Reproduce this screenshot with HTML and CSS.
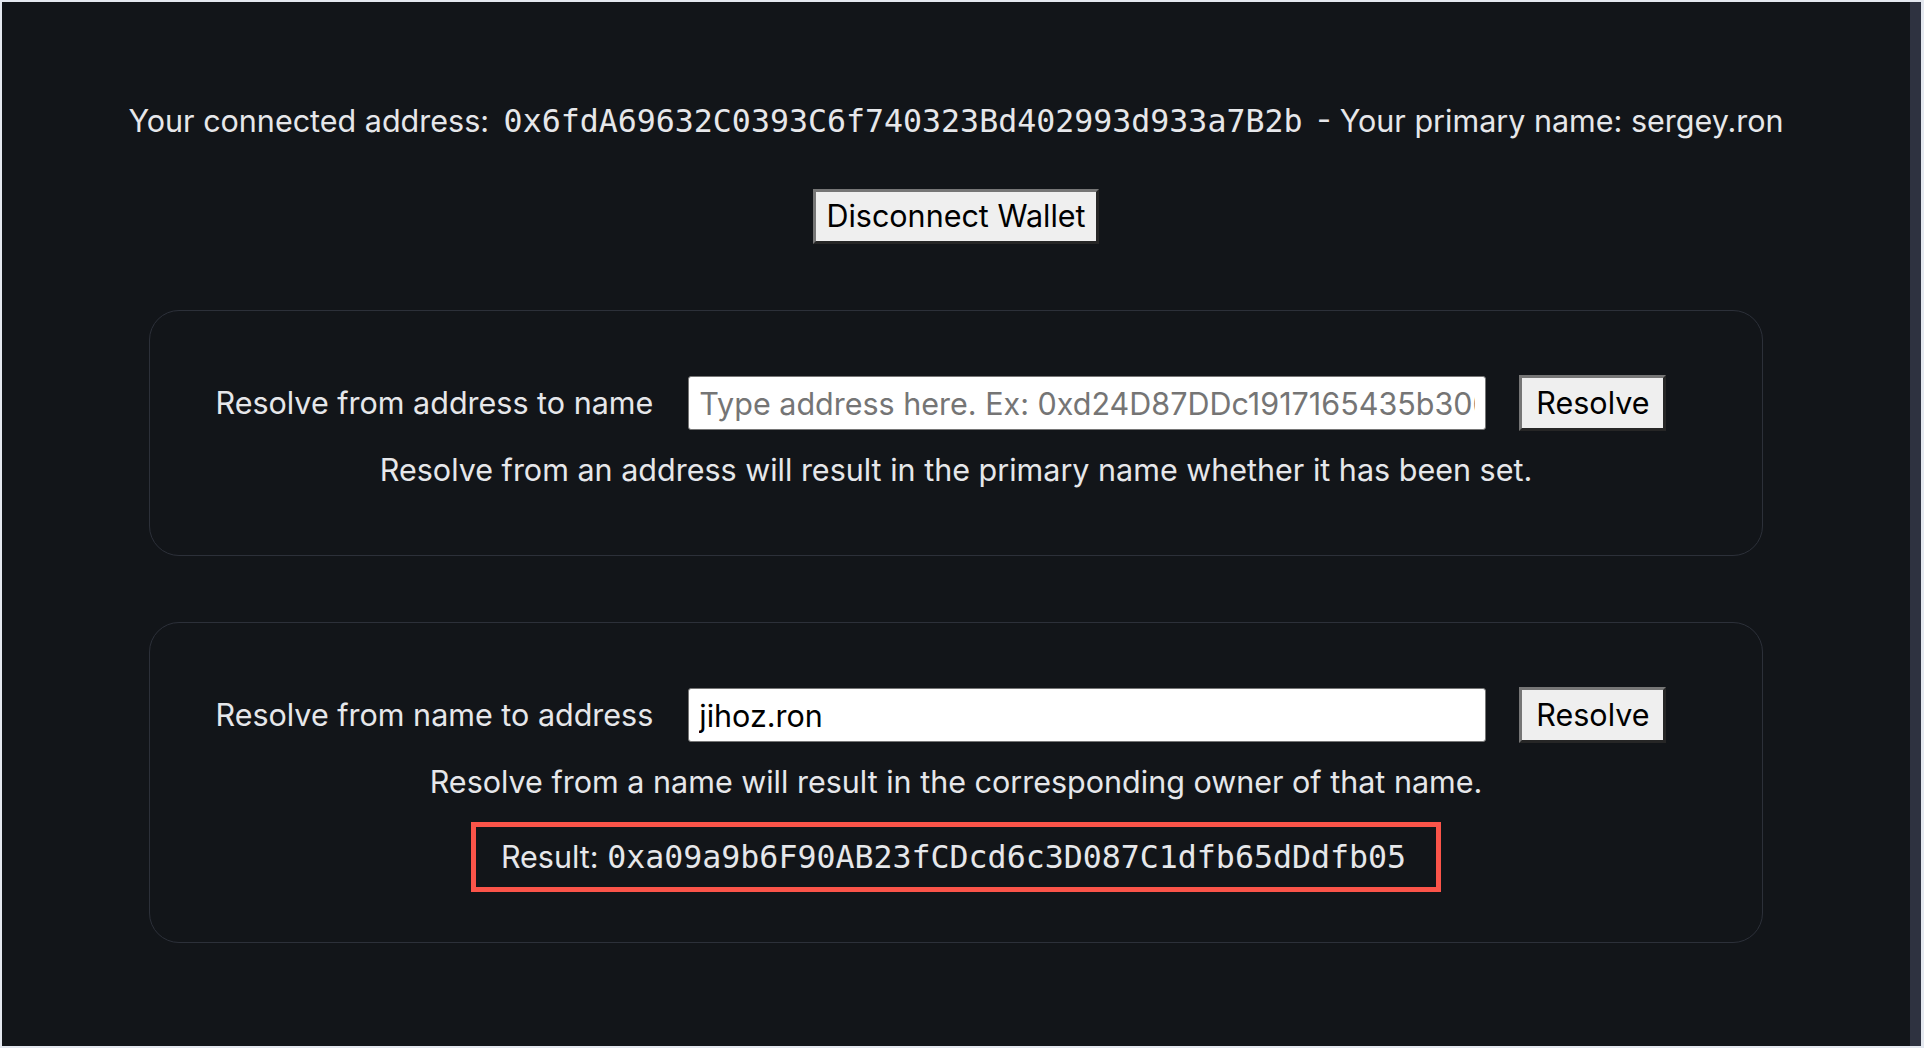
FILE: index.html
```html
<!DOCTYPE html>
<html lang="en">
<head>
<meta charset="utf-8">
<title>Ronin Name Resolver</title>
<link rel="stylesheet" href="styles.css">
</head>
<body>
<div class="frame">
  <main class="page">
    <p class="connected">Your connected address: <span class="mono addr">0x6fdA69632C0393C6f740323Bd402993d933a7B2b</span> - Your primary name: sergey.ron</p>
    <button class="btn btn-disconnect" type="button">Disconnect Wallet</button>

    <section class="card">
      <div class="row">
        <label class="label" for="addr">Resolve from address to name</label>
        <input class="field" id="addr" type="text" placeholder="Type address here. Ex: 0xd24D87DDc1917165435b306aAC68D99e0F4A9333">
        <button class="btn btn-resolve" type="button">Resolve</button>
      </div>
      <p class="desc">Resolve from an address will result in the primary name whether it has been set.</p>
    </section>

    <section class="card">
      <div class="row">
        <label class="label" for="name">Resolve from name to address</label>
        <input class="field" id="name" type="text" value="jihoz.ron">
        <button class="btn btn-resolve" type="button">Resolve</button>
      </div>
      <p class="desc">Resolve from a name will result in the corresponding owner of that name.</p>
      <div class="result">Result: <span class="mono">0xa09a9b6F90AB23fCDcd6c3D087C1dfb65dDdfb05</span></div>
    </section>
  </main>
  <div class="rail"></div>
</div>
</body>
</html>
```

FILE: styles.css
```css
* { box-sizing: border-box; }

html, body {
  margin: 0;
  padding: 0;
  height: 100%;
}

body {
  background: #e4e8ef;
  font-family: Inter, "Noto Sans", sans-serif;
  font-size: 30.5px;
  line-height: 38px;
  color: #e6e7ea;
}

.frame {
  display: flex;
  height: 100vh;
  padding: 2px 3px 2px 2px;
}

.page {
  flex: 1;
  background: #121519;
  display: flex;
  flex-direction: column;
  align-items: center;
  padding-top: 100px;
}

.rail {
  width: 11px;
  background: #2e3240;
}

.connected {
  margin: 0;
  white-space: nowrap;
}

.mono {
  font-family: "DejaVu Sans Mono", "Liberation Mono", monospace;
  font-size: 31.6px;
}

.addr {
  margin: 0 6px;
}

.btn {
  font-family: Inter, "Noto Sans", sans-serif;
  font-size: 30.5px;
  line-height: 38px;
  color: #000;
  background: #efefef;
  border-style: solid;
  border-width: 3px;
  border-color: #767676 #262626 #262626 #767676;
  border-radius: 0;
  padding: 5px 10px 6px;
  margin: 0;
  cursor: pointer;
}

.btn-disconnect {
  margin-top: 49px;
}

.card {
  margin-top: 66px;
  border: 1px solid #2c3039;
  border-radius: 30px;
  padding: 64px 65px 66px;
  display: flex;
  flex-direction: column;
  align-items: center;
}

.card + .card {
  padding-bottom: 50px;
}

.row {
  display: flex;
  align-items: center;
}

.label {
  white-space: nowrap;
}

.field {
  width: 798px;
  height: 54px;
  margin-left: 35px;
  padding: 0 10px;
  border: 1px solid #767676;
  border-radius: 3px;
  background: #fff;
  color: #000;
  font-family: Inter, "Noto Sans", sans-serif;
  font-size: 30.5px;
}

.field::placeholder {
  color: #757575;
}

.btn-resolve {
  margin-left: 33px;
  margin-right: 31px;
  padding: 6px 13px 6px 14px;
}

.desc {
  margin: 20px 0 0;
  text-align: center;
}

.result {
  margin-top: 21px;
  border: 5px solid #fb5449;
  padding: 11px 30px 11px 25px;
  white-space: nowrap;
}
```
